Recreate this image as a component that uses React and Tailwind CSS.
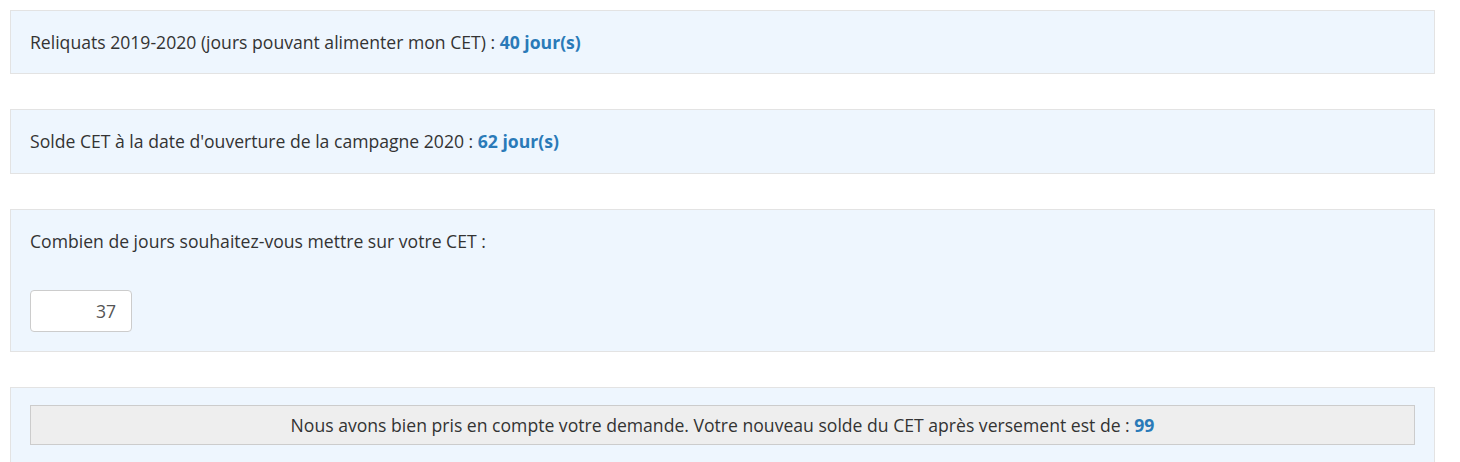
export default function App() {
  return (
    <div
      className="bg-white px-[10px] pt-[10px] text-[17.6px] text-[#333333] leading-[24px]"
      style={{ width: 1460, fontFamily: '"Open Sans", sans-serif' }}
    >
      <div className="w-[1425px] flex flex-col gap-[35px]">
        {/* Reliquats */}
        <div className="bg-[#eef6fe] border border-[#e3e3e3] px-[19px] py-[19px]">
          Reliquats 2019-2020 (jours pouvant alimenter mon CET) :{" "}
          <span className="font-bold text-[#2a7ab8]">40 jour(s)</span>
        </div>

        {/* Solde */}
        <div className="bg-[#eef6fe] border border-[#e3e3e3] px-[19px] pt-[19px] pb-[20px]">
          Solde CET à la date d'ouverture de la campagne 2020 :{" "}
          <span className="font-bold text-[#2a7ab8]">62 jour(s)</span>
        </div>

        {/* Saisie */}
        <div className="bg-[#eef6fe] border border-[#e3e3e3] px-[19px] py-[19px] flex flex-col gap-[37px]">
          <div>Combien de jours souhaitez-vous mettre sur votre CET :</div>
          <input
            type="text"
            defaultValue="37"
            className="w-[102px] h-[42px] bg-white border border-[#cccccc] rounded-[4px] text-right pr-[15px] text-[17.6px] text-[#555555] outline-none"
          />
        </div>

        {/* Résultat */}
        <div className="bg-[#eef6fe] border border-[#e3e3e3] px-[19px] pt-[17px] pb-[19px]">
          <div className="bg-[#eeeeee] border border-[#cccccc] h-[40px] flex items-center justify-center">
            Nous avons bien pris en compte votre demande. Votre nouveau solde du CET après versement est de :&nbsp;
            <span className="font-bold text-[#2a7ab8]">99</span>
          </div>
        </div>
      </div>
    </div>
  );
}
